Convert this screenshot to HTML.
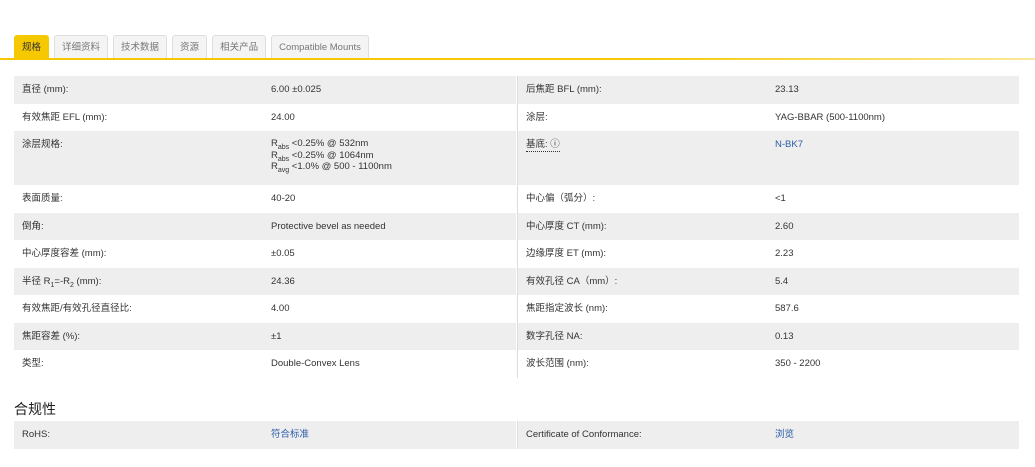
<!DOCTYPE html>
<html><head><meta charset="utf-8"><style>
*{margin:0;padding:0;box-sizing:border-box}
body{width:1035px;height:467px;background:#fff;font-family:"Liberation Sans","Noto Sans CJK SC",sans-serif;color:#333;font-size:9.5px;position:relative;overflow:hidden}
.tabs{position:absolute;top:35px;left:14px;display:flex;gap:5px}
.tab{height:23px;padding:0 7px;border:1px solid #ddd;border-bottom:none;border-radius:3px 3px 0 0;background:#f4f4f4;color:#777;line-height:23px;font-size:9.5px}
.tab.a{background:#f5c800;border-color:#f5c800;color:#333}
.line{position:absolute;top:58px;left:0;width:1035px;height:2px;background:linear-gradient(90deg,#f5c800 60%,#fbe89a)}
.col{position:absolute;top:76px;width:502px}
.row{height:27.5px;position:relative}
.row.g{background:#eee}
.row .l,.row .v{position:absolute;top:8px;line-height:12px;height:12px;white-space:nowrap}
.row .l{left:8px}
.row .v{left:257px}
.row .v.m{height:auto;line-height:11.5px;top:7px}
.row.t{height:54px}
sub{font-size:7px;line-height:0}
.blue{color:#2a5ca8}
h3{position:absolute;top:399px;left:14px;font-size:14px;font-weight:normal;color:#222}
</style></head><body>
<div class="tabs"><div class="tab a">规格</div><div class="tab">详细资料</div><div class="tab">技术数据</div><div class="tab">资源</div><div class="tab">相关产品</div><div class="tab">Compatible Mounts</div></div>
<div class="line"></div>
<div class="col" style="left:14px">
<div class="row g"><span class="l">直径 (mm):</span><span class="v">6.00 ±0.025</span></div>
<div class="row"><span class="l">有效焦距 EFL (mm):</span><span class="v">24.00</span></div>
<div class="row g t"><span class="l">涂层规格:</span><span class="v m">R<sub>abs</sub> &lt;0.25% @ 532nm<br>R<sub>abs</sub> &lt;0.25% @ 1064nm<br>R<sub>avg</sub> &lt;1.0% @ 500 - 1100nm</span></div>
<div class="row"><span class="l">表面质量:</span><span class="v">40-20</span></div>
<div class="row g"><span class="l">倒角:</span><span class="v">Protective bevel as needed</span></div>
<div class="row"><span class="l">中心厚度容差 (mm):</span><span class="v">±0.05</span></div>
<div class="row g"><span class="l">半径 R<sub>1</sub>=-R<sub>2</sub> (mm):</span><span class="v">24.36</span></div>
<div class="row"><span class="l">有效焦距/有效孔径直径比:</span><span class="v">4.00</span></div>
<div class="row g"><span class="l">焦距容差 (%):</span><span class="v">±1</span></div>
<div class="row"><span class="l">类型:</span><span class="v">Double-Convex Lens</span></div>
</div>
<div class="col" style="left:517px;border-left:1px solid #ddd">
<div class="row g"><span class="l">后焦距 BFL (mm):</span><span class="v">23.13</span></div>
<div class="row"><span class="l">涂层:</span><span class="v">YAG-BBAR (500-1100nm)</span></div>
<div class="row g t"><span class="l" style="border-bottom:1px dotted #333;height:13px">基底: ⓘ</span><span class="v blue">N-BK7</span></div>
<div class="row"><span class="l">中心偏（弧分）:</span><span class="v">&lt;1</span></div>
<div class="row g"><span class="l">中心厚度 CT (mm):</span><span class="v">2.60</span></div>
<div class="row"><span class="l">边缘厚度 ET (mm):</span><span class="v">2.23</span></div>
<div class="row g"><span class="l">有效孔径 CA（mm）:</span><span class="v">5.4</span></div>
<div class="row"><span class="l">焦距指定波长 (nm):</span><span class="v">587.6</span></div>
<div class="row g"><span class="l">数字孔径 NA:</span><span class="v">0.13</span></div>
<div class="row"><span class="l">波长范围 (nm):</span><span class="v">350 - 2200</span></div>
</div>
<h3>合规性</h3>
<div class="col" style="left:14px;top:421px"><div class="row g"><span class="l">RoHS:</span><span class="v blue">符合标准</span></div></div>
<div class="col" style="left:517px;top:421px;border-left:1px solid #ddd"><div class="row g"><span class="l">Certificate of Conformance:</span><span class="v blue">浏览</span></div></div>
</body></html>
